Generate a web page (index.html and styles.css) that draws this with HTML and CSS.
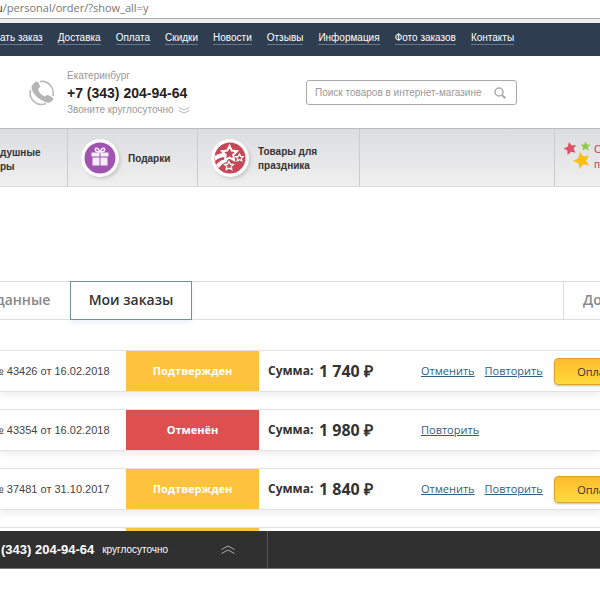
FILE: index.html
```
<!DOCTYPE html>
<html lang="ru">
<head>
<meta charset="utf-8">
<title>Мои заказы</title>
<link rel="stylesheet" href="styles.css">
</head>
<body>
<div class="address"><b>u</b>/personal/order/?show_all=y</div>
<nav class="menu">
  <a href="#">ать заказ</a><a href="#">Доставка</a><a href="#">Оплата</a><a href="#">Скидки</a><a href="#">Новости</a><a href="#">Отзывы</a><a href="#">Информация</a><a href="#">Фото заказов</a><a href="#">Контакты</a>
</nav>
<header class="header">
  <svg class="phone-icon" viewBox="0 0 26 26" aria-hidden="true">
    <path d="M11 1.500A11.500 11.500 0 0 1 23.800 16M1.500 10A11.500 11.500 0 0 0 17 23.500" fill="none" stroke="#b9b9b9" stroke-width="1.600"/>
    <path d="M4 4 7 1.500Q8.500 1 9.300 2.500L11 6Q11.300 7.500 9 9Q10 13.500 15.500 16.500Q17.500 14.500 19 15L23.500 17.500Q25 18.500 24 20Q21.500 23.500 18 22.500C10 20.500 3 13 2.500 8Q2.500 5.500 4 4Z" fill="#b5b5b5"/>
  </svg>
  <div class="contacts">
    <span class="muted">Екатеринбург</span>
    <strong class="phone">+7 (343) 204-94-64</strong>
    <span class="muted">Звоните круглосуточно
      <svg class="chevrons" viewBox="0 0 12 7" aria-hidden="true"><path d="M.5.500 6 3 11.500.500M.5 3.500 6 6 11.500 3.500" fill="none" stroke="#b8b8b8"/></svg>
    </span>
  </div>
  <form class="search">
    <input type="search" aria-label="Поиск товаров" placeholder="Поиск товаров в интернет-магазине">
    <button type="button" aria-label="Найти"><svg viewBox="0 0 12 12"><circle cx="5" cy="5" r="4" fill="none" stroke="#aaa" stroke-width="1.500"/><path d="m8 8 3.300 3.300" stroke="#aaa" stroke-width="2"/></svg></button>
  </form>
</header>
<nav class="catalog">
  <a class="first" href="#">душные<br>ры</a>
  <a class="gifts" href="#">
    <svg class="badge" viewBox="0 0 38 38" aria-hidden="true">
      <circle cx="19" cy="19" r="19" fill="#fff"/><circle cx="19" cy="19" r="15.500" fill="#a053b0"/>
      <path d="M10.500 13.500h8v4h-8zM19.500 13.500h8v4h-8zM11.500 18.500h7V26.500h-7zM19.500 18.500h7V26.500h-7z" fill="#f4edf7"/>
      <path d="M19 13Q13 13 14.500 9.500Q17 8 19 13Q21 8 23.500 9.500Q25 13 19 13Z" fill="none" stroke="#f4edf7" stroke-width="1.500"/>
    </svg>
    <span>Подарки</span></a>
  <a class="party" href="#">
    <svg class="badge" viewBox="0 0 38 38" aria-hidden="true">
      <circle cx="19" cy="19" r="19" fill="#fff"/><circle cx="19" cy="19" r="15.500" fill="#c54857"/>
      <path d="M3.500 17Q8 14 14 14L15 18Q8 18 4 22ZM5 26Q9 20 17 20L16 23Q11 24 8 29Z" fill="#fff"/>
      <path d="m18.500 7 2.300 4.600 5.200.7-3.800 3.600.9 5.200-4.600-2.500-4.600 2.500.9-5.200-3.800-3.600 5.200-.7Z" fill="#c54857" stroke="#fff" stroke-width="2"/>
      <path d="m18 22.500 1.400 2.600 3 .4-2.200 2.100.6 3-2.800-1.400-2.800 1.400.6-3-2.200-2.100 3-.4ZM28.500 15l1.200 2.300 2.500.3-1.800 1.800.4 2.500-2.300-1.200-2.300 1.200.4-2.500-1.800-1.800 2.500-.3Z" fill="#c54857" stroke="#fff" stroke-width="1.300"/>
    </svg>
    <span>Товары для<br>праздника</span></a>
  <div class="spacer"></div>
  <a class="sale" href="#">
    <svg class="stars" viewBox="0 0 28 28" aria-hidden="true">
      <path d="m5 1 2.600 3.500 4.400-.4-2.400 3.700 1.900 4-4.300-1.100L3.600 14 3.300 9.500-.5 7.500l4.200-1.700Z" fill="#dd5268"/>
      <path d="m21.500.500 1.400 2.900 3.600.3-2.600 2.300.7 3.500-3.100-1.700-3.100 1.700.7-3.500-2.600-2.300 3.600-.3Z" fill="#93c84a"/>
      <path d="m16 11 3.300 4.600 5.700-1-3 5 2.800 4.900-5.500-1.200-3.800 4.400-1-5.500-5.500-2.200 5.300-3Z" fill="#fdbd12"/>
    </svg>
    <span>С<br>п</span></a>
</nav>
<main>
  <nav class="tabs">
    <a class="tab personal" href="#">данные</a>
    <a class="tab active" href="#" aria-current="page">Мои заказы</a>
    <a class="tab more" href="#">До</a>
  </nav>
  <section class="orders">
    <article class="order">
      <span class="number">№ 43426 от 16.02.2018</span><span class="status">Подтвержден</span>
      <span class="sum">Сумма:</span><strong class="price">1 740 ₽</strong>
      <span class="actions"><a href="#">Отменить</a><a href="#">Повторить</a></span><button class="pay">Оплатить</button>
    </article>
    <article class="order">
      <span class="number">№ 43354 от 16.02.2018</span><span class="status cancelled">Отменён</span>
      <span class="sum">Сумма:</span><strong class="price">1 980 ₽</strong>
      <span class="actions"><a href="#">Повторить</a></span>
    </article>
    <article class="order">
      <span class="number">№ 37481 от 31.10.2017</span><span class="status">Подтвержден</span>
      <span class="sum">Сумма:</span><strong class="price">1 840 ₽</strong>
      <span class="actions"><a href="#">Отменить</a><a href="#">Повторить</a></span><button class="pay">Оплатить</button>
    </article>
    <article class="order partial"><span class="number"></span><span class="status"></span></article>
  </section>
</main>
<footer class="footer">
  <div class="footer-phone"><strong>(343) 204-94-64</strong><span>круглосуточно</span>
    <svg viewBox="0 0 14 9" aria-hidden="true"><path d="M.5 4.500 7 1l6.500 3.500M.5 8.500 7 5l6.500 3.500" fill="none" stroke="#aaa"/></svg>
  </div>
</footer>
</body>
</html>
```
FILE: styles.css
```
* { box-sizing: border-box; }
body {
  margin: 0;
  overflow: hidden;
  background: #fff;
  color: #333;
  font: 12px/16px "Liberation Sans", Arial, sans-serif;
  white-space: nowrap;
}
a { color: inherit; text-decoration: none; }
svg { display: block; flex: none; }
.address {
  height: 23px;
  margin-left: -4px;
  border-bottom: 4px solid #eee;
  box-shadow: inset 0 -1px #aaa;
  color: #777;
  font: 11px/16px "Open Sans", sans-serif;
}
.address b { color: #333; font-weight: 400; }
.menu {
  display: flex;
  gap: 15px;
  height: 33px;
  padding-top: 7px;
  background: #2e3d50;
  color: #fff;
  font-size: 10px;
}
.menu a { height: 15px; border-bottom: 1px solid #68778a; line-height: 16px; }
.header {
  display: flex;
  height: 72px;
  padding: 12px 0 0 29px;
}
.phone-icon { width: 26px; height: 26px; margin-top: 12px; }
.contacts { display: flex; flex-direction: column; flex: none; width: 251px; padding-left: 12px; }
.muted { display: flex; align-items: center; gap: 4px; color: #999; font-size: 10px; }
.phone { color: #222; font-size: 14px; line-height: 18px; }
.chevrons { width: 12px; height: 7px; }
.search {
  display: flex;
  align-items: center;
  width: 211px;
  height: 25px;
  margin-top: 12px;
  padding: 0 10px 0 8px;
  border: 1px solid #aaa;
  border-radius: 3px;
}
.search input { flex: 1; min-width: 0; padding: 0; border: 0; outline: 0; background: none; font: 10px "Liberation Sans", Arial, sans-serif; }
.search input::placeholder { color: #999; }
.search button { padding: 0; border: 0; background: none; }
.search button svg { width: 12px; height: 12px; }
.catalog {
  display: grid;
  grid-template-columns: 68px 130px 162px 1fr 45px;
  height: 59px;
  border-top: 1px solid #bbb;
  border-bottom: 1px solid #ddd;
  background: linear-gradient(#dcdddf, #efeff0);
  color: #333;
  font-size: 10px;
  font-weight: 700;
  line-height: 14px;
}
.catalog > * { display: flex; align-items: center; border-right: 1px solid #ccc; overflow: hidden; }
.catalog .first { display: block; padding-top: 17px; }
.catalog .gifts, .catalog .party { gap: 9px; padding: 2px 0 0 13px; }
.badge { width: 38px; height: 38px; margin-bottom: 2px; border-radius: 50%; box-shadow: 2px 2px 3px #ccc; }
.catalog .sale { gap: 2px; padding: 0 0 2px 9px; border: 0; color: #c5485a; font-size: 11px; font-weight: 400; line-height: 15px; }
.stars { width: 28px; height: 28px; margin-bottom: 4px; }
.tabs {
  display: flex;
  height: 39px;
  margin-top: 94px;
  border: solid #ddd;
  border-width: 1px 0;
  color: #888;
  font: 600 14px/36px "Open Sans", sans-serif;
}
.personal { width: 74px; margin-left: -4px; }
.active { width: 122px; margin: -1px 0; border: 1px solid #71919f; box-shadow: 0 3px 5px #eef2f7; color: #333; text-align: center; }
.more { width: 37px; margin-left: auto; padding-left: 19px; border-left: 1px solid #ddd; overflow: hidden; }
.orders { display: grid; gap: 17px; margin-top: 30px; }
.order {
  display: flex;
  align-items: center;
  height: 42px;
  border: solid #e2e2e2;
  border-width: 1px 0;
  box-shadow: 0 4px 6px #f0f0f0;
  overflow: hidden;
}
.order > * { flex: none; }
.number { width: 134px; margin-left: -8px; font-size: 11px; color: #444; }
.status { width: 133px; background: #fdc33c; color: #fff; font: 700 11px/40px "Open Sans", sans-serif; text-align: center; }
.cancelled { background: #e04f50; }
.sum { width: 60px; padding-left: 9px; font: 700 12px/16px "Open Sans", sans-serif; }
.price { width: 102px; font: 700 16px/20px "Open Sans", sans-serif; }
.actions { display: flex; gap: 10px; width: 133px; color: #2d608a; font: 11px/16px "Open Sans", sans-serif; }
.actions a { text-decoration: underline; }
.pay {
  width: 98px;
  height: 27px;
  border: 1px solid #dfa32c;
  border-radius: 4px;
  background: linear-gradient(#fdbb2d, #ffdb3c);
  box-shadow: 0 1px 2px #bbb;
  color: #333;
  font: 11px "Open Sans", sans-serif;
}
.partial { height: 4px; align-items: stretch; border-bottom: 0; box-shadow: none; }
.footer { height: 38px; background: #303030; border-bottom: 1px solid #777; color: #fff; }
.footer-phone { display: flex; align-items: center; width: 268px; height: 37px; padding-right: 32px; border-right: 1px solid #555; font-size: 10px; }
.footer-phone strong { padding-left: 1px; margin-right: 8px; font-size: 13px; }
.footer-phone svg { width: 14px; height: 9px; margin-left: auto; }
```
